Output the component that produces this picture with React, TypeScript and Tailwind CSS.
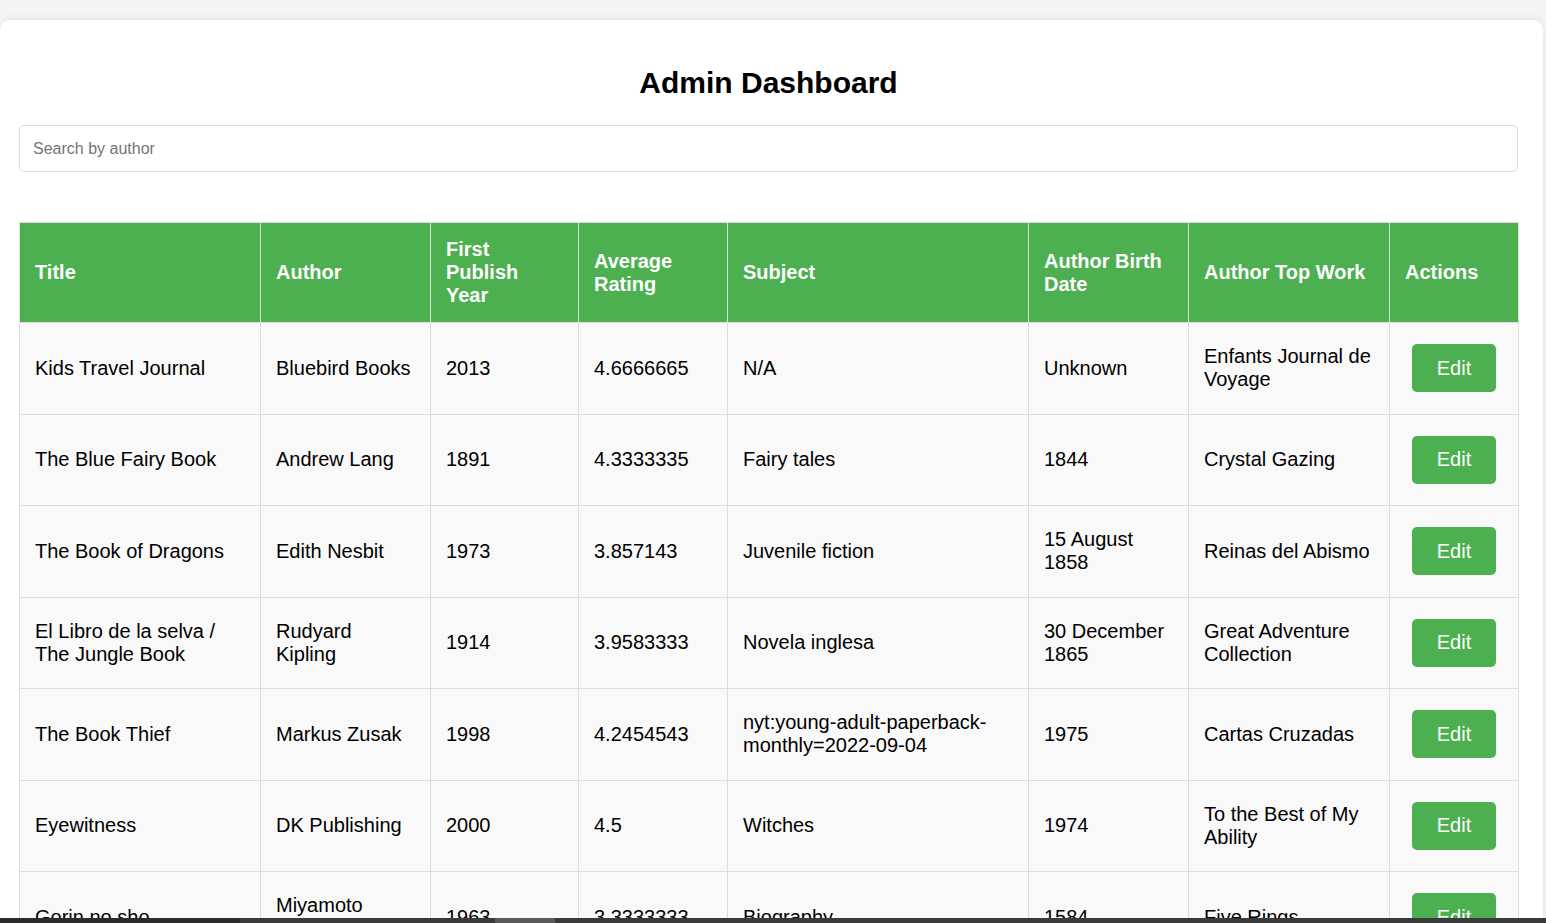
import React from "react"

type Book = {
  title: string
  author: string
  year: string
  rating: string
  subject: string
  birth: string
  topWork: string
}

const books: Book[] = [
  { title: "Kids Travel Journal", author: "Bluebird Books", year: "2013", rating: "4.6666665", subject: "N/A", birth: "Unknown", topWork: "Enfants Journal de Voyage" },
  { title: "The Blue Fairy Book", author: "Andrew Lang", year: "1891", rating: "4.3333335", subject: "Fairy tales", birth: "1844", topWork: "Crystal Gazing" },
  { title: "The Book of Dragons", author: "Edith Nesbit", year: "1973", rating: "3.857143", subject: "Juvenile fiction", birth: "15 August 1858", topWork: "Reinas del Abismo" },
  { title: "El Libro de la selva / The Jungle Book", author: "Rudyard Kipling", year: "1914", rating: "3.9583333", subject: "Novela inglesa", birth: "30 December 1865", topWork: "Great Adventure Collection" },
  { title: "The Book Thief", author: "Markus Zusak", year: "1998", rating: "4.2454543", subject: "nyt:young-adult-paperback-monthly=2022-09-04", birth: "1975", topWork: "Cartas Cruzadas" },
  { title: "Eyewitness", author: "DK Publishing", year: "2000", rating: "4.5", subject: "Witches", birth: "1974", topWork: "To the Best of My Ability" },
  { title: "Gorin no sho", author: "Miyamoto Musashi", year: "1963", rating: "3.3333333", subject: "Biography", birth: "1584", topWork: "Five Rings" },
]

const headers = ["Title", "Author", "First Publish Year", "Average Rating", "Subject", "Author Birth Date", "Author Top Work", "Actions"]
const widths = ["w-[241px]", "w-[170px]", "w-[148px]", "w-[149px]", "w-[301px]", "w-[160px]", "w-[201px]", "w-[129px]"]

export default function App() {
  return (
    <div className="min-h-screen bg-[#f3f4f4] pt-[20px] font-['Liberation_Sans',Arial,sans-serif]">
      <div className="w-[1543px] bg-white rounded-[10px] shadow-[0_0_10px_rgba(0,0,0,0.08)] pl-[19px] pr-[25px] pt-[45px] pb-[40px]">
        <h1 className="text-center text-[30px] leading-[35px] font-bold text-black">Admin Dashboard</h1>
        <input
          type="text"
          placeholder="Search by author"
          className="mt-[25px] block w-full h-[47px] px-[13px] border border-[#dddddd] rounded-[5px] text-[16px] text-black placeholder:text-[#757575] outline-none"
        />
        <table className="mt-[50px] w-full table-fixed border-collapse text-[20px] leading-[23px]">
          <colgroup>
            {widths.map((w, i) => (
              <col key={i} className={w} />
            ))}
          </colgroup>
          <thead>
            <tr className="bg-[#4caf50]">
              {headers.map((h) => (
                <th key={h} className="border border-[#dddddd] p-[15px] text-left font-bold text-white">
                  {h}
                </th>
              ))}
            </tr>
          </thead>
          <tbody>
            {books.map((b) => (
              <tr key={b.title} className="bg-[#f9f9f9] text-black">
                <td className="border border-[#dddddd] p-[15px]">{b.title}</td>
                <td className="border border-[#dddddd] p-[15px]">{b.author}</td>
                <td className="border border-[#dddddd] p-[15px]">{b.year}</td>
                <td className="border border-[#dddddd] p-[15px]">{b.rating}</td>
                <td className="border border-[#dddddd] p-[15px]">{b.subject}</td>
                <td className="border border-[#dddddd] p-[15px]">{b.birth}</td>
                <td className="border border-[#dddddd] p-[15px]">{b.topWork}</td>
                <td className="border border-[#dddddd] p-[15px] text-center">
                  <button className="my-[6.25px] inline-block align-middle w-[84px] h-[48px] rounded-[5px] bg-[#4caf50] text-white text-[20px]">
                    Edit
                  </button>
                </td>
              </tr>
            ))}
          </tbody>
        </table>
      </div>
      <div className="fixed bottom-0 left-0 right-0 h-[5px] flex">
        <div className="w-[240px] bg-[#2b2b2b]" />
        <div className="w-[255px] bg-[#3a3a3a]" />
        <div className="w-[60px] bg-[#5a5a5a]" />
        <div className="flex-1 bg-[#3a3a3a]" />
      </div>
    </div>
  )
}
